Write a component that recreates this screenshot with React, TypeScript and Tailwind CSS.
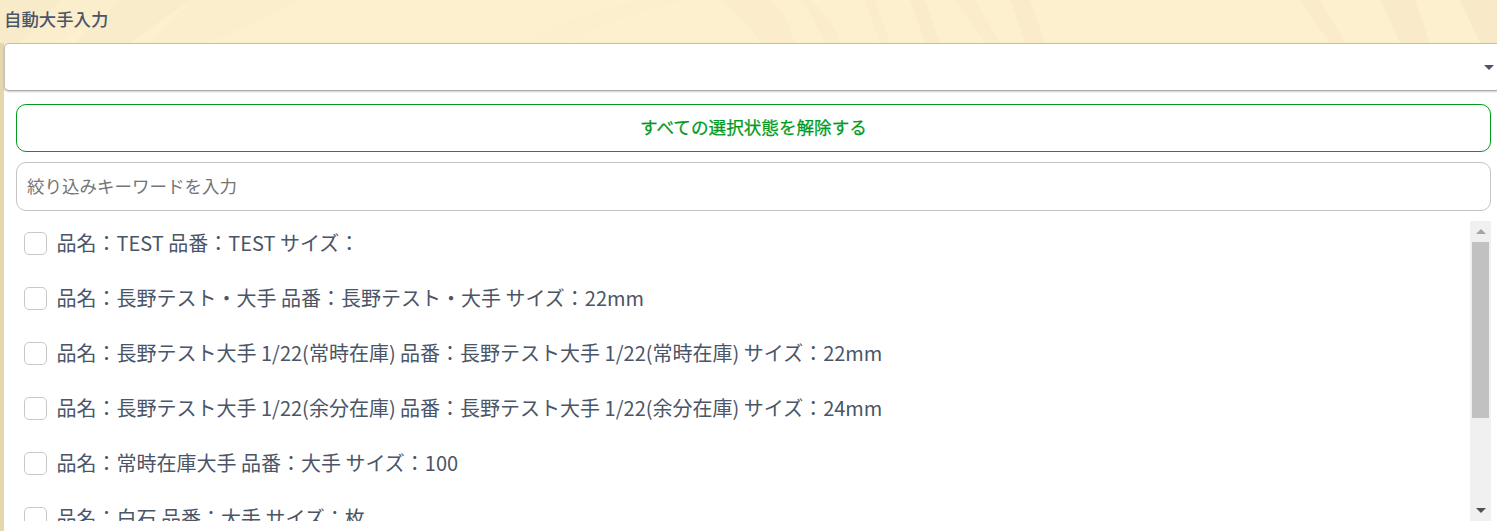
const items = [
  "品名：TEST 品番：TEST サイズ：",
  "品名：長野テスト・大手 品番：長野テスト・大手 サイズ：22mm",
  "品名：長野テスト大手 1/22(常時在庫) 品番：長野テスト大手 1/22(常時在庫) サイズ：22mm",
  "品名：長野テスト大手 1/22(余分在庫) 品番：長野テスト大手 1/22(余分在庫) サイズ：24mm",
  "品名：常時在庫大手 品番：大手 サイズ：100",
  "品名：白石 品番：大手 サイズ：枚",
];

function WoodGrain() {
  return (
    <svg className="absolute inset-0 h-full w-full" viewBox="0 0 1497 531" preserveAspectRatio="none" fill="none">
      <path d="M0 0H60L30 43H0Z" fill="#f8ebc9" />
      <path d="M60 0H120L60 43H20Z" fill="#fbeecd" />
      <path d="M120 0H190L130 43H75Z" fill="#f9ecca" />
      <path d="M190 0H300L210 43H150Z" fill="#fbeecd" />
      <path d="M525 43C580 10 640 -5 690 0C640 10 600 25 570 43Z" fill="#fcefce" />
      <path d="M770 0C790 15 790 30 795 43H760C750 25 735 10 720 0Z" fill="#fbedcb" />
      <path d="M810 0C830 15 835 30 840 43H825C815 25 810 10 800 0Z" fill="#fbedcb" />
      <path d="M865 0L880 43H890L875 0Z" fill="#fbedcb" />
      <path d="M910 0L925 43H940L925 0Z" fill="#faecca" />
      <path d="M955 0L985 43H1000L975 0Z" fill="#fbedcb" />
      <path d="M1010 0L1025 43H1045L1030 0Z" fill="#faecca" />
      <path d="M1300 0L1330 43H1345L1320 0Z" fill="#faecca" />
      <path d="M1380 0L1400 43H1430L1415 0Z" fill="#f9ebc9" />
      <path d="M1460 0L1480 43H1497V0Z" fill="#f8eac8" />
      <rect x="0" y="43" width="4" height="488" fill="#e6d6ae" />
    </svg>
  );
}

export default function App() {
  return (
    <div className="relative h-[531px] w-[1497px] overflow-hidden bg-[#fdf0cf] font-['Noto_Sans_CJK_JP',sans-serif] text-[#4a5568]">
      <WoodGrain />
      <div className="relative flex flex-col pl-1">
        <label className="flex h-[43px] items-start pt-[6px] text-[17.4px] leading-[26px] font-medium">自動大手入力</label>
        <div className="relative z-10 flex h-12 items-center justify-end rounded-l-[5px] border border-r-0 border-[#c4c0b8] border-b-[#aaaaaa] bg-white pr-[3px] shadow-[0_1px_2px_rgba(0,0,0,0.2)]">
          <span className="h-0 w-0 border-x-[5px] border-t-[5px] border-x-transparent border-t-[#4a5568]" />
        </div>
        <div className="flex h-[440px] flex-col gap-[10px] bg-white pt-[13px] pr-[6px] pl-3">
          <button className="h-12 shrink-0 rounded-[10px] border border-[#009a1e] pb-[2px] text-[17.6px] text-[#009a1e] [-webkit-text-stroke:0.25px_#009a1e]">
            すべての選択状態を解除する
          </button>
          <input
            readOnly
            placeholder="絞り込みキーワードを入力"
            className="h-[49px] shrink-0 rounded-[10px] border border-[#c4c4c4] px-[10px] pb-[2px] text-[17.5px] placeholder:text-[#757575]"
          />
          <div className="flex h-[300px] overflow-hidden">
            <ul className="flex flex-1 flex-col gap-[10px] overflow-hidden">
              {items.map((t) => (
                <li key={t} className="flex h-[45px] shrink-0 items-center gap-[10px] pl-2">
                  <span className="h-[23px] w-[22.5px] shrink-0 rounded-[5px] border border-[#c8c8c8] bg-white" />
                  <span className="mb-[2px] text-[20px] leading-[30px]">{t}</span>
                </li>
              ))}
            </ul>
            <div className="flex h-[300px] w-[21px] shrink-0 flex-col items-center bg-[#f0f0f0]">
              <div className="flex h-[21px] w-full items-center justify-center">
                <span className="h-0 w-0 border-x-[5px] border-b-[5px] border-x-transparent border-b-[#a3a3a3]" />
              </div>
              <div className="h-[176px] w-[17px] bg-[#c1c1c1]" />
              <div className="flex-1" />
              <div className="flex h-[21px] w-full items-center justify-center">
                <span className="h-0 w-0 border-x-[5px] border-t-[5px] border-x-transparent border-t-[#505050]" />
              </div>
            </div>
          </div>
        </div>
      </div>
    </div>
  );
}
